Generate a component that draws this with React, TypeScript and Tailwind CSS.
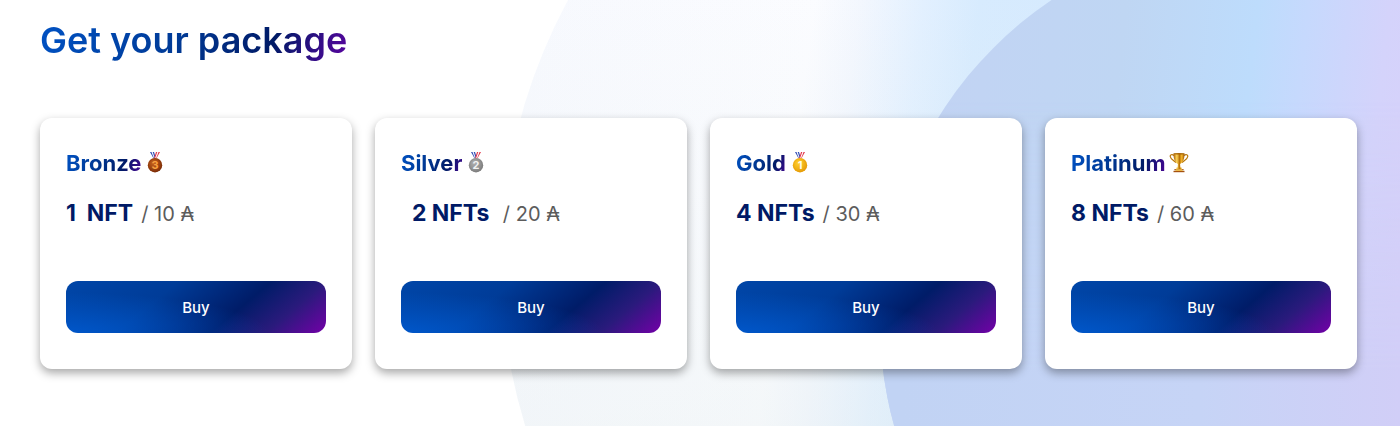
import { useId } from "react";

type Award = "bronze" | "silver" | "gold" | "trophy";

interface Package {
  name: string;
  amount: string;
  price: string;
  award: Award;
}

const packages: Package[] = [
  { name: "Bronze", amount: "1  NFT", price: "10", award: "bronze" },
  { name: "Silver", amount: "  2 NFTs ", price: "20", award: "silver" },
  { name: "Gold", amount: "4 NFTs", price: "30", award: "gold" },
  { name: "Platinum", amount: "8 NFTs", price: "60", award: "trophy" },
];

const medals = {
  bronze: { rank: "3", light: "#c9621c", dark: "#7a2c08", digit: "#f9a03f" },
  silver: { rank: "2", light: "#b0b0b0", dark: "#7c7c7c", digit: "#f2f2f2" },
  gold: { rank: "1", light: "#ffd02e", dark: "#e59a06", digit: "#fffbe6" },
};

function Medal({ kind }: { kind: keyof typeof medals }) {
  const id = useId();
  const { rank, light, dark, digit } = medals[kind];
  return (
    <svg viewBox="0 0 20 22" className="h-[22px] w-5 shrink-0" aria-hidden="true">
      <defs>
        <radialGradient id={id} cx="40%" cy="35%" r="70%">
          <stop offset="0" stopColor={light} />
          <stop offset="1" stopColor={dark} />
        </radialGradient>
      </defs>
      <path d="M5 0h4l2 6.500H8.600z" fill="#2f4bb5" />
      <path d="M6.500 0h1.200l2.200 6.500H9z" fill="#fff" />
      <path d="M15 0h-4L9 6.500h2.400z" fill="#e2364a" />
      <path d="M13.500 0h-1.200L10 6.500h1z" fill="#fff" />
      <circle cx="10" cy="13.200" r="7.200" fill={`url(#${id})`} />
      <circle cx="10" cy="13.200" r="6.400" fill="none" stroke={dark} strokeWidth=".5" opacity=".6" />
      <text x="10" y="17.200" textAnchor="middle" fontSize="11" fontWeight="700" fill={digit} className="font-['Inter']">
        {rank}
      </text>
    </svg>
  );
}

function Trophy() {
  const id = useId();
  return (
    <svg viewBox="0 0 20 22" className="h-[22px] w-5 shrink-0" aria-hidden="true">
      <defs>
        <linearGradient id={id}>
          <stop offset="0" stopColor="#a65c04" />
          <stop offset=".3" stopColor="#ffd75a" />
          <stop offset=".55" stopColor="#b87106" />
          <stop offset=".75" stopColor="#f6b92c" />
          <stop offset="1" stopColor="#955003" />
        </linearGradient>
      </defs>
      <path
        d="M5 3.500C3 2 1 2.800 1.200 4.500c.3 2.500 2.800 3.500 5.800 6M15 3.500c2-1.500 4-.7 3.800 1-.3 2.500-2.800 3.500-5.800 6"
        fill="none"
        stroke="#b87608"
        strokeWidth="1.200"
      />
      <path d="M4.500 1.500h11c0 5.500-1.200 8.500-4.400 10.500l.3 3.500h1.100l.3 1.500H7.200l.3-1.500h1.100l.3-3.500C5.700 10 4.500 7 4.500 1.500z" fill={`url(#${id})`} />
      <ellipse cx="10" cy="1.800" rx="5.500" ry=".7" fill="#a8670a" />
      <path d="M5.500 17h9v1.200h-9z" fill="#8e3b0c" />
      <path d="M6.500 17.300h7v1.700h-7z" fill="#ffd75a" />
      <path d="M4.500 18.800h11v1.400h-11z" fill="#a5500e" />
    </svg>
  );
}

function PackageCard({ name, amount, price, award }: Package) {
  return (
    <li className="rounded-xl bg-white px-[26px] pt-[31px] pb-9 shadow-[0_4px_10px_rgba(0,0,0,0.35)]">
      <div className="flex items-center gap-1">
        <h2 className="bg-[linear-gradient(110deg,#0052c4_0%,#003a96_40%,#001a66_75%,#4b0496_100%)] bg-clip-text text-[22px] leading-7 font-bold text-transparent">
          {name}
        </h2>
        {award === "trophy" ? <Trophy /> : <Medal kind={award} />}
      </div>
      <p className="mt-5 flex items-baseline gap-2 leading-8 whitespace-pre">
        <span className="text-[23px] font-bold text-[#001a66]">{amount}</span>
        <span className="text-xl text-[#5c5c5c]">/ {price} ₳</span>
      </p>
      <button
        type="button"
        className="mt-[52px] h-[52px] w-full rounded-xl bg-[radial-gradient(ellipse_at_0%_100%,rgba(0,92,212,0.8)_0%,transparent_55%),linear-gradient(140deg,#0046a8_0%,#003c98_35%,#001c68_64%,#2a1a7c_81%,#7300a8_100%)] pt-0.5 text-[15px] font-medium text-white"
      >
        Buy
      </button>
    </li>
  );
}

function Backdrop() {
  return (
    <svg
      viewBox="0 0 1400 426"
      preserveAspectRatio="xMaxYMin slice"
      className="absolute inset-0 -z-10 h-full w-full"
      aria-hidden="true"
    >
      <defs>
        <linearGradient id="outer" gradientUnits="userSpaceOnUse" x1="500" y1="300" x2="1400" y2="420">
          <stop offset="0" stopColor="#f7f9fe" />
          <stop offset=".3" stopColor="#fbfcff" />
          <stop offset=".35" stopColor="#f3f7fe" />
          <stop offset=".42" stopColor="#e2f0ff" />
          <stop offset=".48" stopColor="#d7ebfe" />
          <stop offset="1" stopColor="#d0e6fe" />
        </linearGradient>
        <linearGradient id="outerShade" x1="0" y1="0" x2="0" y2="1">
          <stop offset=".25" stopColor="#e6eeee" stopOpacity="0" />
          <stop offset=".65" stopColor="#e6eeee" stopOpacity=".35" />
        </linearGradient>
        <linearGradient id="inner" gradientUnits="userSpaceOnUse" x1="900" y1="213" x2="1400" y2="270">
          <stop offset="0" stopColor="#c2d3f3" />
          <stop offset=".4" stopColor="#bfd6f3" />
          <stop offset=".66" stopColor="#bddcfc" />
          <stop offset=".76" stopColor="#c6d9fd" />
          <stop offset=".92" stopColor="#d4d3fb" />
          <stop offset="1" stopColor="#d6d1fa" />
        </linearGradient>
        <linearGradient id="lower" gradientUnits="userSpaceOnUse" x1="900" y1="0" x2="1400" y2="0">
          <stop offset="0" stopColor="#c1d3f4" />
          <stop offset=".6" stopColor="#c6d4f6" />
          <stop offset="1" stopColor="#d1cef7" />
        </linearGradient>
        <linearGradient id="fade" gradientUnits="userSpaceOnUse" x1="0" y1="100" x2="0" y2="370">
          <stop offset="0" stopColor="#000" />
          <stop offset="1" stopColor="#fff" />
        </linearGradient>
        <mask id="lowerMask" maskUnits="userSpaceOnUse" x="0" y="0" width="1400" height="426">
          <rect width="1400" height="426" fill="url(#fade)" />
        </mask>
      </defs>
      <circle cx="1054" cy="264" r="553" fill="url(#outer)" />
      <circle cx="1054" cy="264" r="553" fill="url(#outerShade)" />
      <circle cx="1268" cy="322" r="388" fill="url(#inner)" />
      <circle cx="1268" cy="322" r="388" fill="url(#lower)" mask="url(#lowerMask)" />
    </svg>
  );
}

export default function App() {
  return (
    <main className="relative isolate min-h-screen overflow-hidden bg-white pt-4 pr-[43px] pb-14 pl-10 font-['Inter',sans-serif]">
      <Backdrop />
      <h1 className="w-fit bg-[linear-gradient(110deg,#0052c4_0%,#003a96_45%,#001a66_75%,#5a04a0_100%)] bg-clip-text text-4xl leading-[48px] font-semibold text-transparent">
        Get your package
      </h1>
      <ul className="mt-[54px] grid grid-cols-[repeat(auto-fit,minmax(260px,1fr))] gap-[23px]">
        {packages.map((item) => (
          <PackageCard key={item.name} {...item} />
        ))}
      </ul>
    </main>
  );
}
